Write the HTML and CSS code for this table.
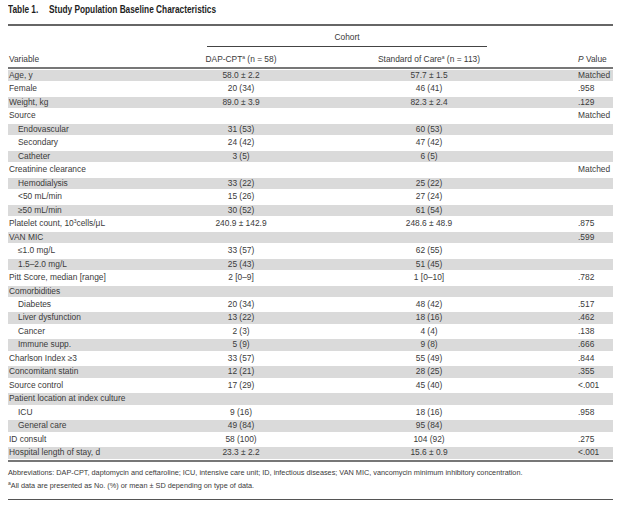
FILE: index.html
```html
<!DOCTYPE html>
<html>
<head>
<meta charset="utf-8">
<link rel="stylesheet" href="styles.css">
</head>
<body>
<div class="page">
  <h1 class="title"><span class="tnum">Table 1.</span>Study Population Baseline Characteristics</h1>
  <div class="table">
    <div class="cohort-row"><div class="cohort">Cohort</div></div>
    <div class="row head">
      <div class="c1">Variable</div>
      <div class="c2">DAP-CPT<sup>a</sup> (n = 58)</div>
      <div class="c3">Standard of Care<sup>a</sup> (n = 113)</div>
      <div class="c4"><i>P</i> Value</div>
    </div>
    <div class="body">
      <div class="row g"><div class="c1">Age, y</div><div class="c2">58.0 ± 2.2</div><div class="c3">57.7 ± 1.5</div><div class="c4">Matched</div></div>
      <div class="row"><div class="c1">Female</div><div class="c2">20 (34)</div><div class="c3">46 (41)</div><div class="c4">.958</div></div>
      <div class="row g"><div class="c1">Weight, kg</div><div class="c2">89.0 ± 3.9</div><div class="c3">82.3 ± 2.4</div><div class="c4">.129</div></div>
      <div class="row"><div class="c1">Source</div><div class="c2"></div><div class="c3"></div><div class="c4">Matched</div></div>
      <div class="row g"><div class="c1 sub">Endovascular</div><div class="c2">31 (53)</div><div class="c3">60 (53)</div><div class="c4"></div></div>
      <div class="row"><div class="c1 sub">Secondary</div><div class="c2">24 (42)</div><div class="c3">47 (42)</div><div class="c4"></div></div>
      <div class="row g"><div class="c1 sub">Catheter</div><div class="c2">3 (5)</div><div class="c3">6 (5)</div><div class="c4"></div></div>
      <div class="row"><div class="c1">Creatinine clearance</div><div class="c2"></div><div class="c3"></div><div class="c4">Matched</div></div>
      <div class="row g"><div class="c1 sub">Hemodialysis</div><div class="c2">33 (22)</div><div class="c3">25 (22)</div><div class="c4"></div></div>
      <div class="row"><div class="c1 sub">&lt;50 mL/min</div><div class="c2">15 (26)</div><div class="c3">27 (24)</div><div class="c4"></div></div>
      <div class="row g"><div class="c1 sub">≥50 mL/min</div><div class="c2">30 (52)</div><div class="c3">61 (54)</div><div class="c4"></div></div>
      <div class="row"><div class="c1">Platelet count, 10<sup>3</sup>cells/μL</div><div class="c2">240.9 ± 142.9</div><div class="c3">248.6 ± 48.9</div><div class="c4">.875</div></div>
      <div class="row g"><div class="c1">VAN MIC</div><div class="c2"></div><div class="c3"></div><div class="c4">.599</div></div>
      <div class="row"><div class="c1 sub">≤1.0 mg/L</div><div class="c2">33 (57)</div><div class="c3">62 (55)</div><div class="c4"></div></div>
      <div class="row g"><div class="c1 sub">1.5–2.0 mg/L</div><div class="c2">25 (43)</div><div class="c3">51 (45)</div><div class="c4"></div></div>
      <div class="row"><div class="c1">Pitt Score, median [range]</div><div class="c2">2 [0–9]</div><div class="c3">1 [0–10]</div><div class="c4">.782</div></div>
      <div class="row g"><div class="c1">Comorbidities</div><div class="c2"></div><div class="c3"></div><div class="c4"></div></div>
      <div class="row"><div class="c1 sub">Diabetes</div><div class="c2">20 (34)</div><div class="c3">48 (42)</div><div class="c4">.517</div></div>
      <div class="row g"><div class="c1 sub">Liver dysfunction</div><div class="c2">13 (22)</div><div class="c3">18 (16)</div><div class="c4">.462</div></div>
      <div class="row"><div class="c1 sub">Cancer</div><div class="c2">2 (3)</div><div class="c3">4 (4)</div><div class="c4">.138</div></div>
      <div class="row g"><div class="c1 sub">Immune supp.</div><div class="c2">5 (9)</div><div class="c3">9 (8)</div><div class="c4">.666</div></div>
      <div class="row"><div class="c1">Charlson Index ≥3</div><div class="c2">33 (57)</div><div class="c3">55 (49)</div><div class="c4">.844</div></div>
      <div class="row g"><div class="c1">Concomitant statin</div><div class="c2">12 (21)</div><div class="c3">28 (25)</div><div class="c4">.355</div></div>
      <div class="row"><div class="c1">Source control</div><div class="c2">17 (29)</div><div class="c3">45 (40)</div><div class="c4">&lt;.001</div></div>
      <div class="row g"><div class="c1">Patient location at index culture</div><div class="c2"></div><div class="c3"></div><div class="c4"></div></div>
      <div class="row"><div class="c1 sub">ICU</div><div class="c2">9 (16)</div><div class="c3">18 (16)</div><div class="c4">.958</div></div>
      <div class="row g"><div class="c1 sub">General care</div><div class="c2">49 (84)</div><div class="c3">95 (84)</div><div class="c4"></div></div>
      <div class="row"><div class="c1">ID consult</div><div class="c2">58 (100)</div><div class="c3">104 (92)</div><div class="c4">.275</div></div>
      <div class="row g"><div class="c1">Hospital length of stay, d</div><div class="c2">23.3 ± 2.2</div><div class="c3">15.6 ± 0.9</div><div class="c4">&lt;.001</div></div>
    </div>
    <div class="notes">
      <p>Abbreviations: DAP-CPT, daptomycin and ceftaroline; ICU, intensive care unit; ID, infectious diseases; VAN MIC, vancomycin minimum inhibitory concentration.</p>
      <p><sup>a</sup>All data are presented as No. (%) or mean ± SD depending on type of data.</p>
    </div>
  </div>
</div>
</body>
</html>
```

FILE: styles.css
```css
html, body {
  margin: 0;
  padding: 0;
  background: #fff;
}

.page {
  width: 605px;
  padding: 4px 0 0 8px;
  font-family: "Liberation Sans", Arial, sans-serif;
  color: #3a3a3a;
}

.title {
  margin: 0;
  height: 12px;
  font-family: "Liberation Sans", Arial, sans-serif;
  font-weight: bold;
  font-size: 10px;
  line-height: 12px;
  color: #1e1e1e;
  white-space: nowrap;
  transform: scaleX(0.83);
  transform-origin: left center;
}

.tnum {
  display: inline-block;
  width: 49.5px;
}

.table {
  margin-top: 8px;
  border-top: 2px solid #666;
  border-bottom: 1px solid #555;
  font-size: 8.4px;
}

.cohort-row {
  height: 21px;
}

.cohort {
  margin-left: 199px;
  width: 280px;
  height: 20px;
  line-height: 22px;
  text-align: center;
  border-bottom: 1px solid #444;
}

.row {
  display: grid;
  grid-template-columns: 192px 82px 294px 37px;
  height: 13.48px;
  line-height: 13.48px;
  box-sizing: border-box;
  white-space: nowrap;
}

.row.head {
  height: 20px;
  line-height: 24px;
  border-bottom: 2px solid #777;
  box-sizing: content-box;
}

.row.g {
  background: #dadada;
  border-top: 1px solid #fff;
  border-bottom: 1px solid #fff;
  line-height: 11.48px;
}

.body {
  border-bottom: 2px solid #777;
}

.c1 {
  padding-left: 1px;
}

.c1.sub {
  padding-left: 10px;
}

.c2, .c3 {
  text-align: center;
}

.c4 {
  padding-left: 2px;
}

sup {
  font-size: 5px;
  line-height: 0;
  vertical-align: 3px;
}

.notes {
  padding: 4px 0 7px 0;
  font-size: 7.3px;
  line-height: 13px;
  white-space: nowrap;
}

.notes p {
  margin: 0;
}

.notes sup {
  font-size: 5px;
  vertical-align: 3px;
}
```
